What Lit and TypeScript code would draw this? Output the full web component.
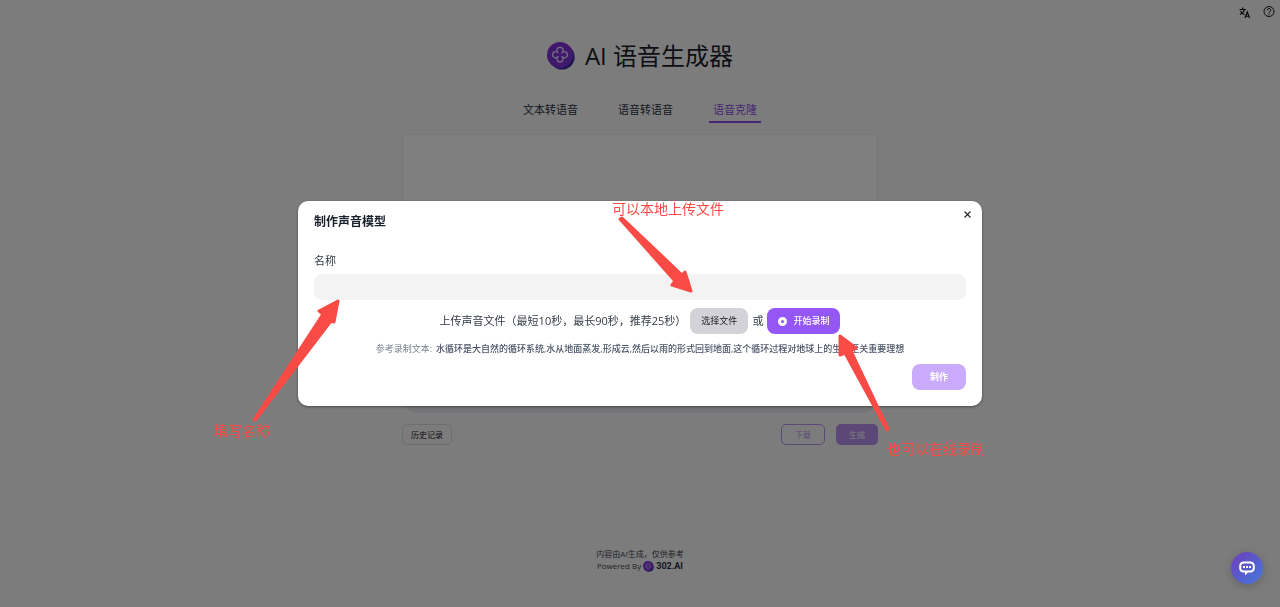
import { LitElement, html, css } from "lit";
import { customElement, state } from "lit/decorators.js";

@customElement("brand-mark")
export class BrandMark extends LitElement {
  static styles = css`
    :host { display: block; }
    .mark { display: block; width: 100%; height: 100%; }
  `;
  render() {
    return html`<svg class="mark" viewBox="0 0 28 28" aria-hidden="true">
      <circle cx="15" cy="15" r="12.600" fill="#3b2d9e" />
      <circle cx="13" cy="13" r="13" fill="#8132d6" />
      <path
        d="M11.200 10.900A3.100 3.100 0 1 1 14.800 10.900A3.100 3.100 0 1 1 14.800 14.500A3.100 3.100 0 1 1 11.200 14.500A3.100 3.100 0 1 1 11.200 10.900"
        fill="none" stroke="#e9d5ff" stroke-width="1.400" stroke-linejoin="round" />
    </svg>`;
  }
}

@customElement("app-root")
export class AppRoot extends LitElement {
  @state() private name = "";

  static styles = css`
    :host {
      display: block;
      font-family: "Open Sans", "Noto Sans CJK SC", sans-serif;
      font-size: 11px;
      line-height: 16px;
      color: #18202c;
    }
    * { box-sizing: border-box; }
    button, input, textarea { font: inherit; color: inherit; margin: 0; border: 0; }
    .page {
      position: relative;
      min-height: 100vh;
      background: #f9f9f9;
      display: flex;
      flex-direction: column;
      align-items: center;
      padding: 38px 16px 35px;
    }
    .tools {
      position: absolute;
      top: 6px;
      right: 5px;
      display: flex;
      gap: 12px;
    }
    .tool { display: block; padding: 0; background: none; width: 12px; height: 12px; }
    .tool svg { display: block; width: 12px; height: 12px; }
    .brand { display: flex; align-items: center; gap: 10px; }
    .brand-logo { width: 28px; height: 28px; }
    .brand-name { margin: 0; font-size: 24px; line-height: 36px; font-weight: 400; }
    .tabs { display: flex; gap: 32px; margin-top: 24px; }
    .tab {
      padding: 4px 4px 3px;
      color: #2a313c;
      text-decoration: none;
      border-bottom: 2px solid transparent;
    }
    .tab-active { color: #8f4de6; border-color: #8f4de6; }
    .workspace { width: 100%; max-width: 476px; margin-top: 11px; }
    .editor {
      display: block;
      width: 100%;
      height: 279px;
      resize: none;
      background: #fff;
      border-radius: 4px 4px 16px 16px;
      border: 1px solid #f1f1f3;
      border-bottom: 24px solid #e9ebf0;
    }
    .actions { display: flex; gap: 11px; margin-top: 11px; }
    .small {
      height: 21px;
      padding: 0 13px;
      border-radius: 5px;
      font-size: 8px;
      line-height: 16px;
      background: #8f4de6;
      color: #fff;
    }
    .history {
      margin-right: auto;
      padding: 0 8px;
      color: #18202c;
      background: #f9f9f9;
      border: 1px solid #dcdce0;
    }
    .download { background: transparent; color: #8f4de6; border: 1px solid #8f4de6; opacity: 0.6; }
    .generate { opacity: 0.6; }
    .foot {
      margin-top: auto;
      text-align: center;
      font-size: 8px;
      line-height: 12px;
      color: #3f4652;
    }
    .note { margin: 0; }
    .powered { display: flex; justify-content: center; align-items: center; gap: 2px; }
    .powered-logo { width: 11px; height: 11px; }
    .powered-name { font-family: Roboto, sans-serif; font-size: 9px; font-weight: 700; color: #25304a; }
    .chat {
      position: fixed;
      right: 17px;
      bottom: 23px;
      width: 32px;
      height: 32px;
      padding: 0;
      display: grid;
      place-items: center;
      border-radius: 50%;
      background: linear-gradient(135deg, #6e3dbb, #4579dc);
      box-shadow: 0 2px 8px #0003;
    }
    .chat svg { width: 16px; height: 16px; }
    .backdrop {
      position: fixed;
      inset: 0;
      display: grid;
      place-items: center;
      padding: 0 16px;
      background: #00000080;
    }
    .dialog {
      position: relative;
      width: 100%;
      max-width: 684px;
      padding: 13px 16px 16px;
      border-radius: 10px;
      background: #fff;
      box-shadow: 0 1px 3px #0006;
    }
    .dialog-title { margin: 0; font-size: 12px; line-height: 16px; font-weight: 700; }
    .close {
      position: absolute;
      top: 8px;
      right: 9px;
      width: 11px;
      height: 11px;
      padding: 0;
      background: none;
    }
    .close svg { display: block; width: 11px; height: 11px; }
    .label { display: block; margin: 23px 0 5px; color: #343b45; }
    .name {
      display: block;
      width: 100%;
      height: 26px;
      padding: 0 10px;
      border-radius: 8px;
      background: #f3f3f3;
      outline: none;
    }
    .source {
      display: flex;
      justify-content: center;
      align-items: center;
      gap: 4px;
      margin-top: 8px;
      color: #343b45;
    }
    .button {
      display: flex;
      align-items: center;
      gap: 6px;
      height: 26px;
      padding: 0 11px;
      border-radius: 8px;
      font-size: 9px;
      line-height: 16px;
    }
    .pick { background: #d3d2d8; color: #20242c; }
    .record { background: #9457f6; color: #fff; font-weight: 500; }
    .record svg { width: 9px; height: 9px; }
    .hint { margin: 8px 0; text-align: center; font-size: 9px; line-height: 14px; color: #7b8290; }
    .sample { font-weight: 500; color: #4a5366; margin-left: 4px; }
    .submit {
      margin-left: auto;
      padding: 0 18px;
      background: #caabfb;
      color: #fff;
      font-weight: 700;
    }
    .guide {
      position: absolute;
      inset: 0;
      width: 100%;
      height: 100%;
      overflow: visible;
      pointer-events: none;
      fill: #f94b45;
    }
    .arrow { stroke: #f94b45; stroke-width: 3px; stroke-linejoin: round; }
    .guide-text { font-size: 14px; font-weight: 400; }
  `;

  private onName(e: Event) {
    this.name = (e.target as HTMLInputElement).value;
  }

  render() {
    return html`
      <main class="page">
        <div class="tools">
          <button class="tool" aria-label="切换语言">
            <svg viewBox="0 0 24 24" fill="none" stroke="#111" stroke-width="2.400">
              <path d="M1 7h13M7.500 3v4M3 10c2 4 5 6 8 7M11 7c-1 5-5 8-9 10M12 24l4.500-12L21 24M13.500 20.500h6" />
            </svg>
          </button>
          <button class="tool" aria-label="帮助">
            <svg viewBox="0 0 24 24" fill="none" stroke="#111" stroke-width="2">
              <circle cx="12" cy="11" r="10" />
              <path d="M8.500 8.500a3.500 3.500 0 1 1 5 3.100c-1 .6-1.500 1-1.500 2.400M12 15.500v2.500" />
            </svg>
          </button>
        </div>
        <header class="brand">
          <brand-mark class="brand-logo"></brand-mark>
          <h1 class="brand-name">AI 语音生成器</h1>
        </header>
        <nav class="tabs">
          <a class="tab" href="#text">文本转语音</a>
          <a class="tab" href="#speech">语音转语音</a>
          <a class="tab tab-active" href="#clone" aria-current="page">语音克隆</a>
        </nav>
        <section class="workspace">
          <textarea class="editor" aria-label="文本"></textarea>
          <div class="actions">
            <button class="small history">历史记录</button>
            <button class="small download">下载</button>
            <button class="small generate">生成</button>
          </div>
        </section>
        <footer class="foot">
          <p class="note">内容由AI生成，仅供参考</p>
          <div class="powered">
            <span>Powered By</span>
            <brand-mark class="powered-logo"></brand-mark>
            <span class="powered-name">302.AI</span>
          </div>
        </footer>
      </main>
      <div class="backdrop">
        <section class="dialog" role="dialog" aria-modal="true" aria-labelledby="dialog-title">
          <h2 class="dialog-title" id="dialog-title">制作声音模型</h2>
          <button class="close" aria-label="关闭">
            <svg viewBox="0 0 11 11" fill="none" stroke="#222" stroke-width="1.100">
              <path d="M2.500 2.500l6 6M8.500 2.500l-6 6" />
            </svg>
          </button>
          <label class="label" for="name">名称</label>
          <input class="name" id="name" type="text" .value=${this.name} @input=${this.onName} />
          <div class="source">
            <span>上传声音文件（最短10秒，最长90秒，推荐25秒）</span>
            <button class="button pick">选择文件</button>
            <span>或</span>
            <button class="button record">
              <svg viewBox="0 0 9 9" aria-hidden="true">
                <circle cx="4.500" cy="4.500" r="3" fill="none" stroke="#fff" stroke-width="3" />
              </svg>
              开始录制
            </button>
          </div>
          <p class="hint">参考录制文本:<span class="sample">水循环是大自然的循环系统,水从地面蒸发,形成云,然后以雨的形式回到地面,这个循环过程对地球上的生命至关重要理想</span></p>
          <button class="button submit">制作</button>
          <svg class="guide" viewBox="0 0 684 205">
            <path class="arrow" d="M322 18L324 17L384 74L387 71L393 90L374 84L377 80Z" />
            <path class="arrow" d="M-44 219L-42 218L33 120L36 121L40 100L21 110L25 113Z" />
            <path class="arrow" d="M589 229L590 228L553 150L558 147L542 135L542 154L547 152Z" />
            <text class="guide-text" x="314" y="13">可以本地上传文件</text>
            <text class="guide-text" x="-84" y="235">填写名称</text>
            <text class="guide-text" x="589" y="253">也可以在线录制</text>
          </svg>
        </section>
      </div>
      <button class="chat" aria-label="在线客服">
        <svg viewBox="0 0 16 16" fill="none" stroke="#fff" stroke-width="2">
          <path d="M4.500 2.500h7a3.300 3.300 0 0 1 3.300 3.300v2.400a3.300 3.300 0 0 1-3.300 3.300H8.500L7 13v-1.500H4.500a3.300 3.300 0 0 1-3.300-3.300V5.800a3.300 3.300 0 0 1 3.300-3.300z" />
          <path d="M4 7h2M7 7h2M10 7h2" />
        </svg>
      </button>
    `;
  }
}
